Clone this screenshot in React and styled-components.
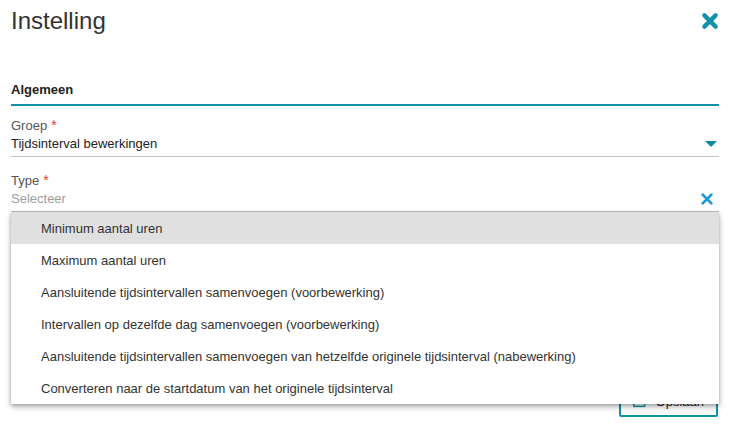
import React from 'react';
import styled, { createGlobalStyle } from 'styled-components';

const GlobalStyle = createGlobalStyle`
  body {
    margin: 0;
    background: #ffffff;
    font-family: "Liberation Sans", Arial, sans-serif;
    color: #222;
  }
`;

const Page = styled.div`
  width: 734px;
  height: 426px;
  box-sizing: border-box;
  padding: 0 15px 0 11px;
  overflow: hidden;
`;

const Header = styled.div`
  display: flex;
  align-items: center;
  justify-content: space-between;
  height: 42px;
`;

const Title = styled.h1`
  margin: 0;
  font-size: 24px;
  font-weight: normal;
  color: #333;
`;

const CloseButton = styled.button`
  border: 0;
  background: none;
  padding: 0;
  width: 18px;
  height: 18px;
  display: flex;
  cursor: pointer;
`;

const SectionTitle = styled.div`
  margin-top: 40px;
  padding-bottom: 7px;
  font-size: 13px;
  font-weight: bold;
  color: #222;
  border-bottom: 2px solid #1190aa;
`;

const Field = styled.div`
  position: relative;
  padding-top: ${p => p.$top}px;
  border-bottom: 1px solid #c2c2c2;
`;

const Label = styled.div`
  height: 16px;
  font-size: 13px;
  line-height: 16px;
  color: #555;
`;

const Required = styled.span`
  color: #e53935;
  margin-left: 4px;
  font-size: 14px;
  line-height: 0;
`;

const ValueRow = styled.div`
  display: flex;
  align-items: center;
  justify-content: space-between;
  height: 18px;
  padding: 1px 0 3px;
  font-size: 13px;
  line-height: 18px;
  color: ${p => (p.$placeholder ? '#9e9e9e' : '#222')};
`;

const ClearIcon = styled.span`
  display: flex;
  margin-right: 5px;
`;

const Menu = styled.ul`
  position: absolute;
  top: 100%;
  left: 0;
  right: 0;
  margin: 1px 0 0;
  padding: 0;
  list-style: none;
  background: #fff;
  box-shadow: 0 3px 6px rgba(0, 0, 0, 0.28), 0 1px 3px rgba(0, 0, 0, 0.2);
  z-index: 2;
`;

const MenuItem = styled.li`
  height: 32px;
  display: flex;
  align-items: center;
  padding-left: 30px;
  font-size: 13px;
  color: #333;
  background: ${p => (p.$active ? '#e0e0e0' : '#fff')};
`;

const Footer = styled.div`
  display: flex;
  justify-content: flex-end;
  margin-top: 173px;
  padding-right: 1px;
`;

const SaveButton = styled.button`
  display: flex;
  align-items: center;
  gap: 10px;
  width: 99px;
  height: 32px;
  padding: 0 12px;
  border: 2px solid #1190aa;
  border-radius: 2px;
  background: #fff;
  font-family: inherit;
  font-size: 13px;
  color: #222;
`;

const items = [
  'Minimum aantal uren',
  'Maximum aantal uren',
  'Aansluitende tijdsintervallen samenvoegen (voorbewerking)',
  'Intervallen op dezelfde dag samenvoegen (voorbewerking)',
  'Aansluitende tijdsintervallen samenvoegen van hetzelfde originele tijdsinterval (nabewerking)',
  'Converteren naar de startdatum van het originele tijdsinterval',
];

function Cross({ size, color, width }) {
  return (
    <svg width={size} height={size} viewBox="0 0 16 16">
      <path d="M3 3 L13 13 M13 3 L3 13" stroke={color} strokeWidth={width} strokeLinecap="round" />
    </svg>
  );
}

function Caret() {
  return (
    <svg width="12" height="7" viewBox="0 0 12 7" style={{ marginRight: 2 }}>
      <path d="M0 0 H12 L6 6 Z" fill="#0f88a2" />
    </svg>
  );
}

export default function App() {
  return (
    <Page>
      <GlobalStyle />
      <Header>
        <Title>Instelling</Title>
        <CloseButton aria-label="Sluiten">
          <Cross size={18} color="#1190aa" width={3.8} />
        </CloseButton>
      </Header>
      <SectionTitle>Algemeen</SectionTitle>
      <Field $top={12}>
        <Label>Groep<Required>*</Required></Label>
        <ValueRow>
          Tijdsinterval bewerkingen
          <Caret />
        </ValueRow>
      </Field>
      <Field $top={16}>
        <Label>Type<Required>*</Required></Label>
        <ValueRow $placeholder>
          Selecteer
          <ClearIcon>
            <Cross size={14} color="#1e96d8" width={3.2} />
          </ClearIcon>
        </ValueRow>
        <Menu>
          {items.map((it, i) => (
            <MenuItem key={it} $active={i === 0}>{it}</MenuItem>
          ))}
        </Menu>
      </Field>
      <Footer>
        <SaveButton>
          <svg width="14" height="14" viewBox="0 0 14 14">
            <rect x="1" y="1" width="12" height="12" fill="none" stroke="#1190aa" strokeWidth="1.6" />
            <rect x="4" y="1" width="6" height="4" fill="none" stroke="#1190aa" strokeWidth="1.4" />
          </svg>
          Opslaan
        </SaveButton>
      </Footer>
    </Page>
  );
}
